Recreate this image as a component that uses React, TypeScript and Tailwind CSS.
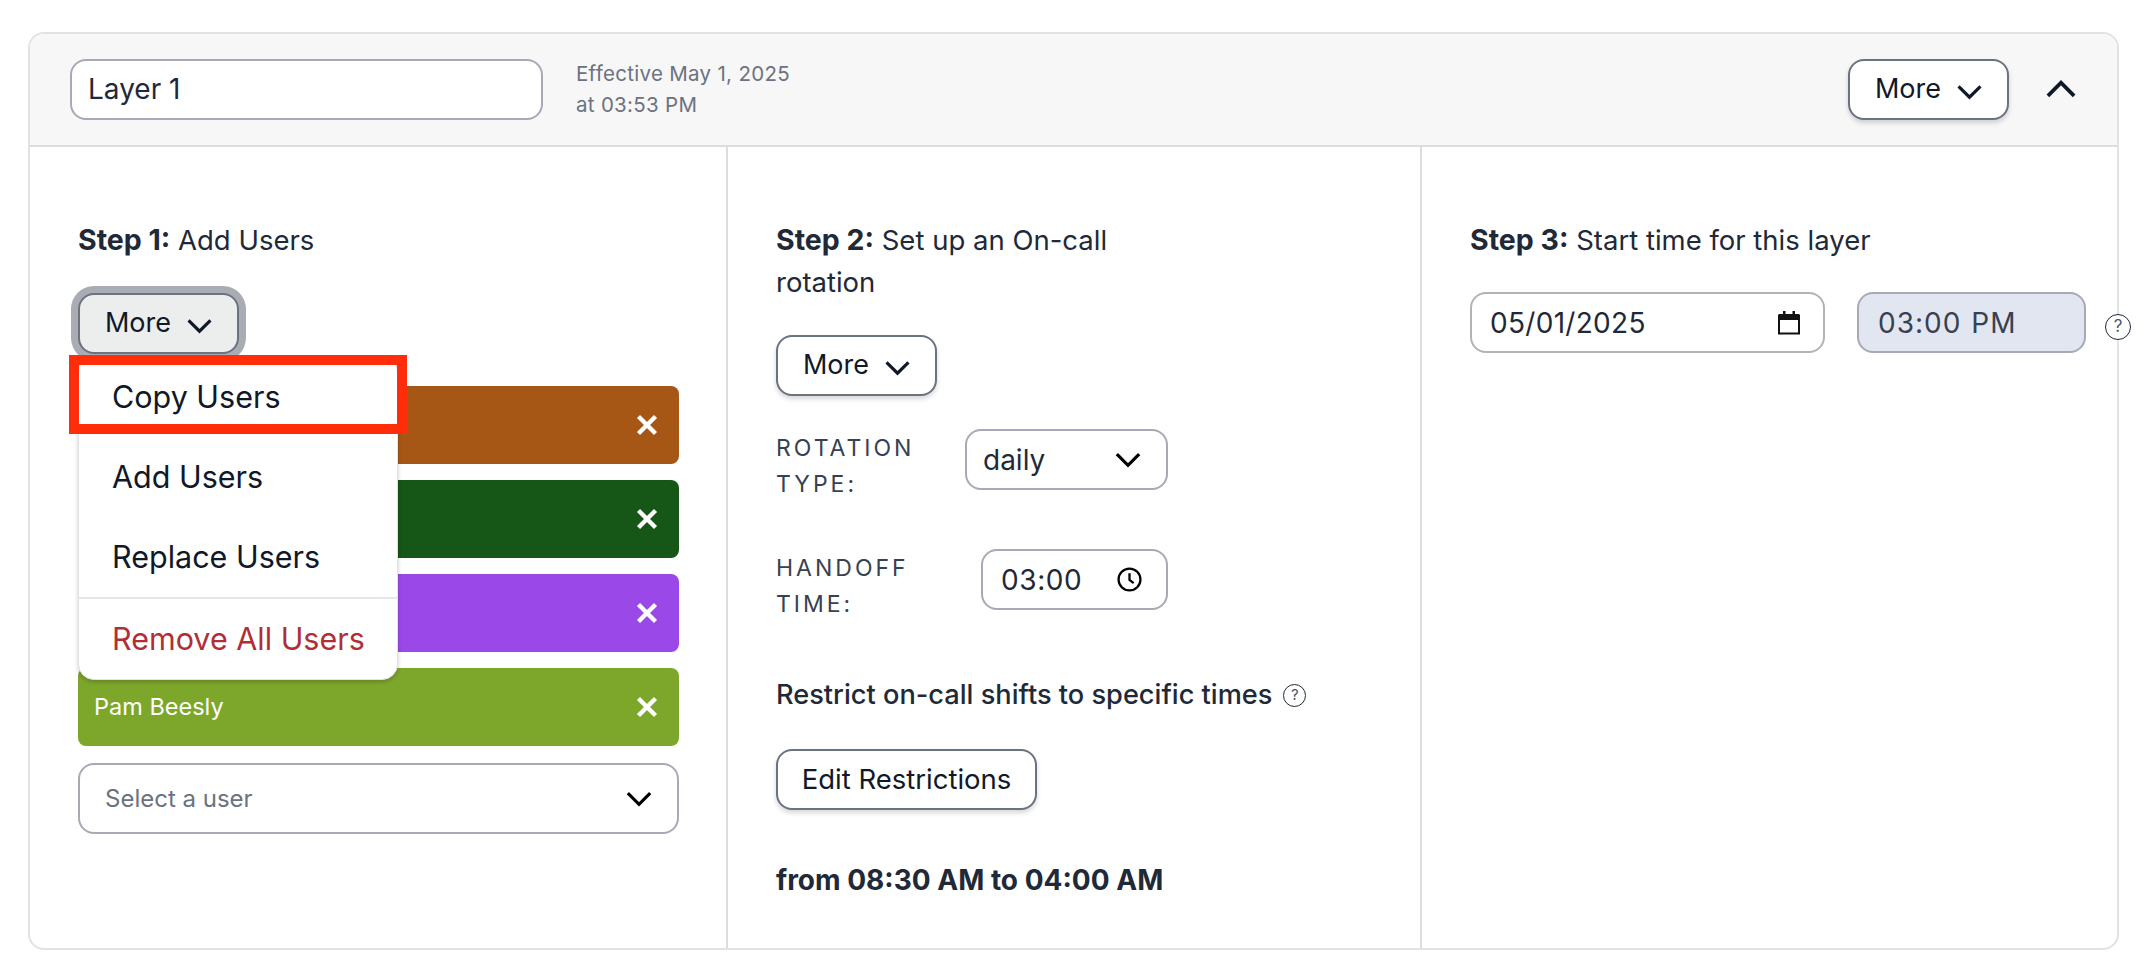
import type { ReactNode } from 'react'

const font = "font-['Inter','Liberation_Sans',sans-serif]"

function Chevron({ className, up }: { className: string; up?: boolean }) {
  return (
    <svg viewBox="0 0 24 16" fill="none" stroke="currentColor" strokeWidth="3" className={className}>
      <path d={up ? 'M1.5 13.5 12 3l10.500 10.500' : 'M1.5 3 12 13.500 22.500 3'} />
    </svg>
  )
}

function Help({ className }: { className: string }) {
  return (
    <span className={`inline-flex items-center justify-center rounded-full border border-[#1f2937] text-[#4b5563] bg-white ${className}`}>
      ?
    </span>
  )
}

function MoreButton({ active }: { active?: boolean }) {
  return (
    <button
      className={`flex h-[61px] w-[161px] items-center justify-center gap-[16px] rounded-[16px] border-2 border-[#6b7280] text-[27px] text-[#111827] ${
        active ? 'bg-[#eceded] ring-[7px] ring-[#a9adb3]' : 'bg-white shadow-[0_3px_5px_rgba(0,0,0,0.16)]'
      }`}
    >
      More
      <Chevron className="mt-[4px] h-[17px] w-[25px]" />
    </button>
  )
}

function StepTitle({ step, children }: { step: string; children: ReactNode }) {
  return (
    <p className="text-[27.5px] leading-[42px] text-[#1f2937]">
      <span className="text-[28.5px] font-bold">{step}</span> {children}
    </p>
  )
}

function UserBar({ color, name }: { color: string; name?: string }) {
  return (
    <div className={`flex h-[78px] items-center justify-between rounded-[8px] pl-[16px] pr-[21px] text-[23.5px] text-white ${color}`}>
      <span>{name}</span>
      <svg viewBox="0 0 22 22" stroke="currentColor" strokeWidth="4.4" className="h-[22px] w-[22px]">
        <path d="M2.5 2.5l17 17M19.5 2.5l-17 17" />
      </svg>
    </div>
  )
}

function MenuItem({ label, danger }: { label: string; danger?: boolean }) {
  return (
    <div className={`flex h-[80px] items-center pl-[33px] text-[30.5px] ${danger ? 'text-[#b02f36]' : 'text-[#111827]'}`}>
      {label}
    </div>
  )
}

export default function App() {
  return (
    <div className={`min-h-[968px] bg-white pl-[28px] pt-[32px] ${font}`}>
      <div className="w-[2091px] rounded-[16px] border-2 border-[#e1e2e4]">
        {/* Layer header */}
        <div className="flex h-[113px] items-center rounded-t-[14px] border-b-2 border-[#dcdde0] bg-[#f7f7f8] pb-[1px] pl-[40px] pr-[41px]">
          <div className="flex h-[61px] w-[473px] items-center rounded-[16px] border-2 border-[#a7aab5] bg-white pl-[16px] text-[28px] text-[#1f2937]">
            Layer 1
          </div>
          <div className="ml-[33px] text-[20.5px] leading-[31px] tracking-[0.3px] text-[#6b7280]">
            <div>Effective May 1, 2025</div>
            <div>at 03:53 PM</div>
          </div>
          <div className="ml-auto flex items-center gap-[37px]">
            <MoreButton />
            <Chevron up className="h-[20px] w-[30px] text-[#111827]" />
          </div>
        </div>

        <div className="flex h-[801px]">
          {/* Step 1 */}
          <div className="w-[698px] shrink-0 border-r-2 border-[#dcdde0] pl-[48px] pr-[47px] pt-[72px]">
            <StepTitle step="Step 1:">Add Users</StepTitle>
            <div className="relative mt-[32px]">
              <MoreButton active />
              <div className="absolute left-0 top-[63px] z-10 w-[320px] rounded-[16px] border border-[#e2e3e6] bg-white shadow-[0_2px_4px_rgba(0,0,0,0.2)]">
                <MenuItem label="Copy Users" />
                <MenuItem label="Add Users" />
                <MenuItem label="Replace Users" />
                <div className="border-t-2 border-[#e5e6e9]" />
                <MenuItem label="Remove All Users" danger />
              </div>
              {/* Red highlight around the first menu item */}
              <div className="absolute left-[-9px] top-[62px] z-20 h-[79px] w-[338px] border-[10px] border-[#ff2d0a]" />
            </div>
            <div className="mt-[32px] flex flex-col gap-[16px]">
              <UserBar color="bg-[#a65716]" />
              <UserBar color="bg-[#165616]" />
              <UserBar color="bg-[#9a48e8]" />
              <UserBar color="bg-[#7da72b]" name="Pam Beesly" />
            </div>
            <div className="mt-[17px] flex h-[71px] items-center justify-between rounded-[16px] border-2 border-[#a7aab5] bg-white pl-[25px] pr-[25px] text-[24px] text-[#6b7280]">
              Select a user
              <Chevron className="h-[17px] w-[26px] text-black" />
            </div>
          </div>

          {/* Step 2 */}
          <div className="w-[694px] shrink-0 border-r-2 border-[#dcdde0] pl-[48px] pt-[72px]">
            <div className="w-[400px]">
              <StepTitle step="Step 2:">Set up an On-call rotation</StepTitle>
            </div>
            <div className="mt-[32px]">
              <MoreButton />
            </div>
            <div className="mt-[33px] flex w-[392px] flex-col gap-[47px]">
              <div className="flex items-start justify-between">
                <div className="w-[135px] pt-[1px] text-[23px] uppercase leading-[36px] tracking-[3px] text-[#374151]">Rotation type:</div>
                <div className="flex h-[61px] w-[203px] items-center justify-between rounded-[16px] border-2 border-[#a7aab5] pl-[16px] pr-[25px] text-[28px] text-[#1f2937]">
                  daily
                  <Chevron className="h-[17px] w-[26px] text-black" />
                </div>
              </div>
              <div className="flex items-start justify-between">
                <div className="w-[135px] pt-[1px] text-[23px] uppercase leading-[36px] tracking-[3px] text-[#374151]">Handoff time:</div>
                <div className="flex h-[61px] w-[187px] items-center justify-between rounded-[16px] border-2 border-[#a7aab5] pl-[18px] pr-[24px] text-[28px] tracking-[0.6px] text-[#1f2937]">
                  03:00
                  <svg viewBox="0 0 24 24" fill="none" stroke="#000" strokeWidth="2.2" className="h-[25px] w-[25px]">
                    <circle cx="12" cy="12" r="10.5" />
                    <path d="M12 6v6.5l4 3" />
                  </svg>
                </div>
              </div>
            </div>
            <div className="mt-[53px] flex items-center gap-[11px] text-[27.2px] font-medium leading-[40px] text-[#1f2937]">
              Restrict on-call shifts to specific times
              <Help className="h-[23px] w-[23px] text-[15px] font-normal" />
            </div>
            <button className="mt-[34px] flex h-[61px] w-[261px] items-center justify-center rounded-[16px] border-2 border-[#6b7280] bg-white text-[27.5px] text-[#111827] shadow-[0_3px_5px_rgba(0,0,0,0.16)]">
              Edit Restrictions
            </button>
            <p className="mt-[49px] text-[28px] font-bold leading-[42px] text-[#1f2937]">from 08:30 AM to 04:00 AM</p>
          </div>

          {/* Step 3 */}
          <div className="min-w-0 flex-1 pl-[48px] pt-[72px]">
            <StepTitle step="Step 3:">Start time for this layer</StepTitle>
            <div className="mt-[31px] flex items-center">
              <div className="flex h-[61px] w-[355px] shrink-0 items-center justify-between rounded-[16px] border-2 border-[#b1b3b8] pl-[18px] pr-[23px] text-[28px] tracking-[0.3px] text-[#1f2937]">
                05/01/2025
                <svg viewBox="0 0 22 24" className="h-[24px] w-[22px]">
                  <path d="M1 4.5h20v18H1z" fill="none" stroke="#111" strokeWidth="2" />
                  <path d="M1 3h20v6H1zM5 0h2.5v4H5zM14.5 0H17v4h-2.500z" fill="#111" />
                </svg>
              </div>
              <div className="ml-[32px] flex h-[61px] w-[229px] shrink-0 items-center gap-[10px] rounded-[16px] border-2 border-[#a7aab5] bg-[#e1e6f0] pl-[19px] text-[28px] tracking-[1px] text-[#374151]">
                <span>03:00</span>
                <span>PM</span>
              </div>
              <Help className="z-10 ml-[19px] mt-[8px] h-[26px] w-[26px] shrink-0 text-[17px]" />
            </div>
          </div>
        </div>
      </div>
    </div>
  )
}
